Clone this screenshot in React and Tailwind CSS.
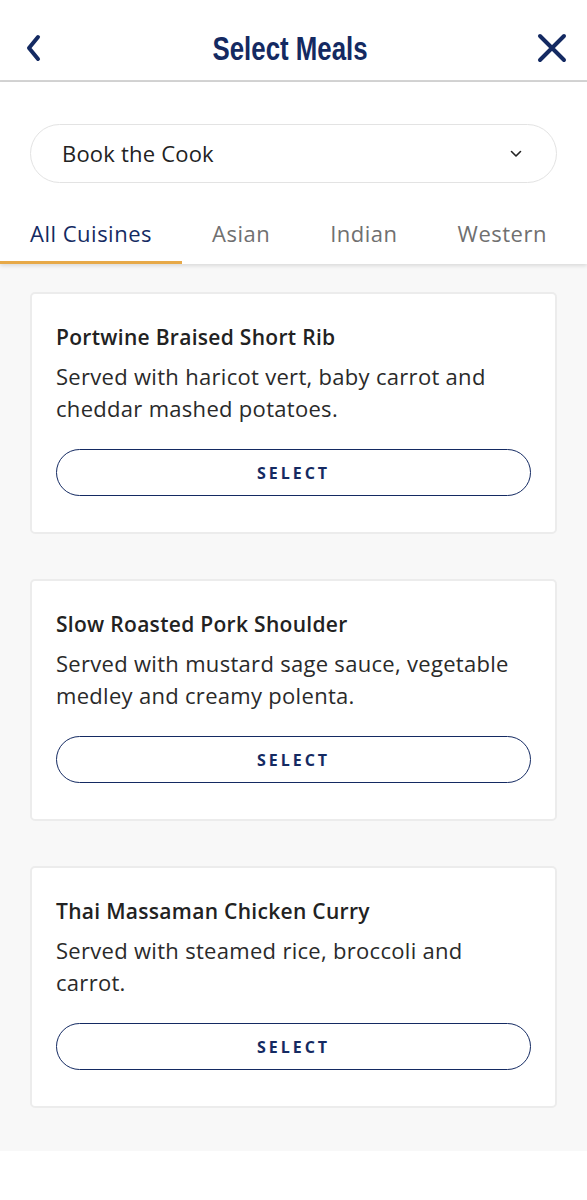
import React, { useState } from 'react'

const meals = [
  {
    name: 'Portwine Braised Short Rib',
    desc: 'Served with haricot vert, baby carrot and cheddar mashed potatoes.',
  },
  {
    name: 'Slow Roasted Pork Shoulder',
    desc: 'Served with mustard sage sauce, vegetable medley and creamy polenta.',
  },
  {
    name: 'Thai Massaman Chicken Curry',
    desc: 'Served with steamed rice, broccoli and carrot.',
  },
]

const tabs = ['All Cuisines', 'Asian', 'Indian', 'Western']

const App = () => {
  const [active, setActive] = useState(0)

  return (
    <div className="w-[587px] min-h-[1200px] bg-white font-['Open_Sans','Lato',sans-serif]">
      {/* Header */}
      <div className="h-[82px] flex items-center justify-between pl-[24px] pr-[20px] pt-[16px] border-b-2 border-[#d4d4d4]">
        <button className="w-[20px] h-[30px] flex items-center justify-center">
          <svg width="18" height="28" viewBox="0 0 18 28" fill="none">
            <path d="M13 3 L4 14 L13 25" stroke="#142a62" strokeWidth="4" strokeLinecap="round" strokeLinejoin="round" />
          </svg>
        </button>
        <h1 className="text-[34px] leading-none font-bold text-[#142a62] scale-x-[0.76] font-['Liberation_Sans',sans-serif]">
          Select Meals
        </h1>
        <button className="w-[30px] h-[30px] flex items-center justify-center">
          <svg width="30" height="30" viewBox="0 0 30 30" fill="none">
            <path d="M3 3 L27 27 M27 3 L3 27" stroke="#142a62" strokeWidth="4" strokeLinecap="round" />
          </svg>
        </button>
      </div>

      {/* Dropdown + tabs */}
      <div className="relative z-10 bg-white shadow-[0_2px_4px_rgba(0,0,0,0.12)]">
        <div className="px-[30px] pt-[42px]">
          <div className="h-[59px] rounded-full border border-[#e3e3e3] flex items-center justify-between pl-[31px] pr-[34px]">
            <span className="text-[22px] tracking-[0.2px] text-[#222] font-medium">Book the Cook</span>
            <svg width="12" height="8" viewBox="0 0 12 8" fill="none">
              <path d="M1.5 1.5 L6 6 L10.5 1.5" stroke="#222" strokeWidth="1.6" strokeLinecap="round" strokeLinejoin="round" />
            </svg>
          </div>
        </div>
        <div className="flex mt-[30px]">
          {tabs.map((t, i) => (
            <button
              key={t}
              onClick={() => setActive(i)}
              className={`px-[30px] h-[51px] pb-[8px] flex items-center text-[22px] tracking-[0.5px] border-b-[3px] ${
                i === active ? 'text-[#142a62] font-medium border-[#e7a948]' : 'text-[#707070] border-transparent'
              }`}
            >
              {t}
            </button>
          ))}
        </div>
      </div>

      {/* Meal list */}
      <div className="bg-[#f8f8f8] px-[30px] pt-[28px] pb-[43px] flex flex-col gap-[45px]">
        {meals.map((m) => (
          <div key={m.name} className="bg-white border-2 border-[#ececec] rounded-[5px] px-[24px] pt-[29px] pb-[36px]">
            <h2 className="text-[21px] tracking-[0.3px] font-semibold text-[#222] leading-[28px]">{m.name}</h2>
            <p className="mt-[9px] text-[22px] tracking-[0.3px] text-[#2a2a2a] leading-[32px]">{m.desc}</p>
            <button className="mt-[25px] w-full h-[47px] rounded-full border-[1.5px] border-[#142a62] text-[#142a62] text-[16px] font-bold tracking-[3px]">
              SELECT
            </button>
          </div>
        ))}
      </div>
    </div>
  )
}

export default App
